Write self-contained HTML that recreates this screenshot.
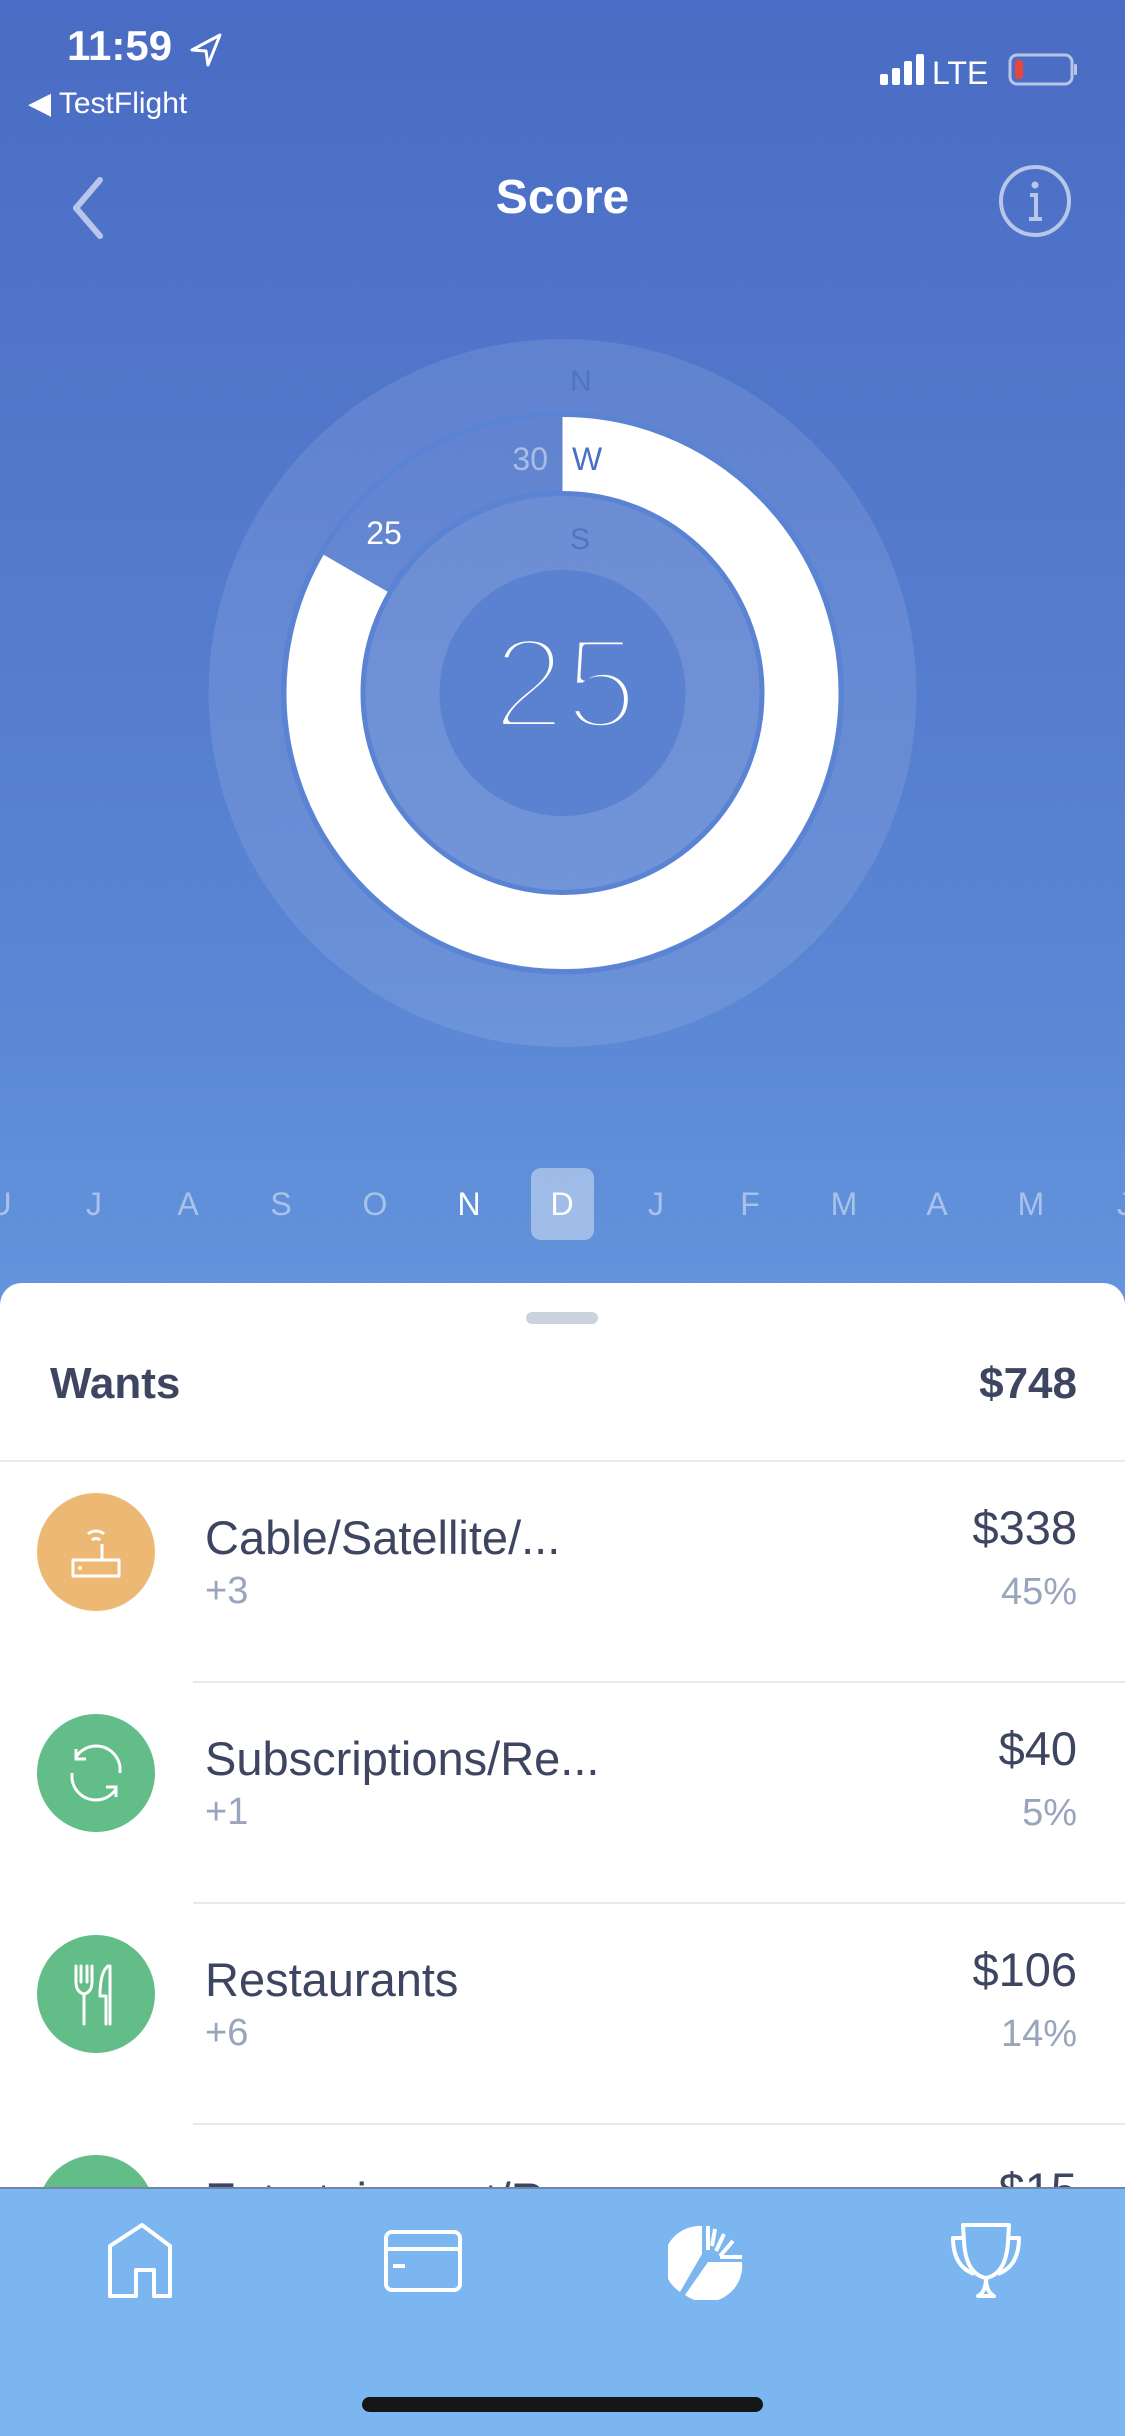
<!DOCTYPE html>
<html><head><meta charset="utf-8">
<style>
*{margin:0;padding:0;box-sizing:border-box}
body{width:1125px;height:2436px;overflow:hidden;position:relative;font-family:"Liberation Sans",sans-serif;background:linear-gradient(180deg,#4a6cc4 0%,#5a85d4 40%,#6596dd 55%,#6596dd 100%)}
.a{position:absolute;white-space:nowrap}
.m{position:absolute;top:1186px;width:60px;text-align:center;font-size:32px;color:rgba(255,255,255,0.45);line-height:36px;transform:translateX(-30px)}
.t{color:#3d4560;font-size:47px}
.s{color:#98a5bd;font-size:38px}
.r{right:48px;text-align:right}
.ic{position:absolute;left:37px;width:118px;height:118px;border-radius:50%}
.sep{position:absolute;left:193px;right:0;height:2px;background:#e6eaf0}
</style></head><body>
<!-- status bar -->
<div class="a" style="left:67px;top:22px;font-size:42px;font-weight:bold;color:#fff">11:59</div>
<svg class="a" style="left:188px;top:32px" width="36" height="36" viewBox="0 0 36 36"><path d="M32 3 L4 18 L18 19 L20 33 Z" fill="none" stroke="#fff" stroke-width="3" stroke-linejoin="round"/></svg>
<div class="a" style="left:28px;top:86px;font-size:30px;color:#fff">◀ TestFlight</div>
<svg class="a" style="left:878px;top:50px" width="200" height="40" viewBox="0 0 200 40">
<rect x="2" y="24" width="8" height="11" rx="2" fill="#fff"/><rect x="14" y="18" width="8" height="17" rx="2" fill="#fff"/><rect x="26" y="11" width="8" height="24" rx="2" fill="#fff"/><rect x="38" y="4" width="8" height="31" rx="2" fill="#fff"/>
<text x="54" y="34" font-family="Liberation Sans" font-size="32" fill="#fff">LTE</text>
<rect x="132" y="5" width="62" height="29" rx="7" fill="none" stroke="rgba(255,255,255,0.6)" stroke-width="3"/><rect x="137" y="10" width="8" height="19" rx="3" fill="#e8453c"/><rect x="196" y="14" width="3" height="11" rx="1" fill="rgba(255,255,255,0.6)"/>
</svg>
<!-- nav -->
<svg class="a" style="left:66px;top:176px" width="44" height="64" viewBox="0 0 44 64"><path d="M34 4 L10 32 L34 60" fill="none" stroke="rgba(255,255,255,0.6)" stroke-width="6" stroke-linecap="round" stroke-linejoin="round"/></svg>
<div class="a" style="left:0;width:1125px;text-align:center;top:170px;font-size:48px;font-weight:bold;color:#fff">Score</div>
<svg class="a" style="left:997px;top:163px" width="76" height="76" viewBox="0 0 76 76"><circle cx="38" cy="38" r="34" fill="none" stroke="rgba(255,255,255,0.6)" stroke-width="4"/><circle cx="38" cy="22" r="3.5" fill="rgba(255,255,255,0.6)"/><path d="M33 32 H39 V56 M32 56 H45" fill="none" stroke="rgba(255,255,255,0.6)" stroke-width="4"/></svg>
<!-- gauge -->
<svg class="a" style="left:0;top:0" width="1125" height="1100" viewBox="0 0 1125 1100">
<circle cx="562.5" cy="693" r="354" fill="rgba(255,255,255,0.1)"/>
<circle cx="562.5" cy="693" r="200" fill="rgba(255,255,255,0.06)"/>
<circle cx="562.5" cy="693" r="123" fill="#5a82d1"/>
<circle cx="562.5" cy="693" r="279" fill="none" stroke="#5a83d4" stroke-width="5"/>
<circle cx="562.5" cy="693" r="200" fill="none" stroke="#5a83d4" stroke-width="6"/>
<circle cx="562.5" cy="693" r="239" fill="none" stroke="#fff" stroke-width="74" stroke-dasharray="1251.5 2000" transform="rotate(-90 562.5 693)"/>
<text x="581" y="391" text-anchor="middle" font-family="Liberation Sans" font-size="30" fill="#4f74c6">N</text>
<text x="548" y="470" text-anchor="end" font-family="Liberation Sans" font-size="32" fill="rgba(255,255,255,0.45)">30</text>
<text x="572" y="470" font-family="Liberation Sans" font-size="32" fill="#4a6fc4">W</text>
<text x="384" y="544" text-anchor="middle" font-family="Liberation Sans" font-size="32" fill="#fff">25</text>
<text x="580" y="549" text-anchor="middle" font-family="Liberation Sans" font-size="30" fill="#4f74c6">S</text>
<text x="565" y="728" text-anchor="middle" font-family="Liberation Sans" font-size="130" fill="#fff" stroke="#5a82d1" stroke-width="8" stroke-linejoin="round">25</text>
</svg>
<!-- months -->
<div class="a" style="left:531px;top:1168px;width:63px;height:72px;border-radius:10px;background:rgba(255,255,255,0.4)"></div>
<div class="m" style="left:0px">U</div><div class="m" style="left:94px">J</div><div class="m" style="left:188px">A</div><div class="m" style="left:281px">S</div><div class="m" style="left:375px">O</div><div class="m" style="left:469px;color:#fff">N</div><div class="m" style="left:562px;color:#fff">D</div><div class="m" style="left:656px">J</div><div class="m" style="left:750px">F</div><div class="m" style="left:844px">M</div><div class="m" style="left:937px">A</div><div class="m" style="left:1031px">M</div><div class="m" style="left:1125px">J</div>
<!-- sheet -->
<div class="a" style="left:0;top:1283px;width:1125px;height:1000px;background:#fff;border-radius:22px 22px 0 0"></div>
<div class="a" style="left:526px;top:1312px;width:72px;height:12px;border-radius:6px;background:#cbd3dd"></div>
<div class="a" style="left:50px;top:1359px;font-size:44px;font-weight:bold;color:#3d4560">Wants</div>
<div class="a r" style="top:1359px;font-size:44px;font-weight:bold;color:#3d4560">$748</div>
<div class="a" style="left:0;right:0;top:1460px;height:2px;background:#e6eaf0"></div>
<!-- row1 -->
<div class="ic" style="top:1493px;background:#edb774"></div>
<svg class="a" style="left:66px;top:1520px" width="60" height="66" viewBox="0 0 60 66"><path d="M22 14 A12 12 0 0 1 38 14 M26 20 A6 6 0 0 1 34 20" fill="none" stroke="#fff" stroke-width="3"/><path d="M36 24 V40 M7 40 H53 V56 H7 Z" fill="none" stroke="#fff" stroke-width="3" stroke-linejoin="round"/><circle cx="14" cy="48" r="2" fill="#fff"/></svg>
<div class="a t" style="left:205px;top:1510px">Cable/Satellite/...</div>
<div class="a s" style="left:205px;top:1570px">+3</div>
<div class="a t r" style="top:1500px">$338</div>
<div class="a s r" style="top:1571px">45%</div>
<div class="sep" style="top:1681px"></div>
<!-- row2 -->
<div class="ic" style="top:1714px;background:#62bd88"></div>
<svg class="a" style="left:62px;top:1739px" width="68" height="68" viewBox="0 0 68 68"><path d="M14 18 A24 24 0 0 1 58 28 V34 M54 50 A24 24 0 0 1 10 40 V34" fill="none" stroke="#fff" stroke-width="3"/><path d="M14 10 V20 H24 M54 58 V48 H44" fill="none" stroke="#fff" stroke-width="3"/></svg>
<div class="a t" style="left:205px;top:1731px">Subscriptions/Re...</div>
<div class="a s" style="left:205px;top:1791px">+1</div>
<div class="a t r" style="top:1721px">$40</div>
<div class="a s r" style="top:1792px">5%</div>
<div class="sep" style="top:1902px"></div>
<!-- row3 -->
<div class="ic" style="top:1935px;background:#62bd88"></div>
<svg class="a" style="left:66px;top:1960px" width="60" height="70" viewBox="0 0 60 70"><path d="M10 6 V22 Q10 32 18 34 V64 M26 6 V22 Q26 32 18 34 M15 6 V22 M21 6 V22 M42 6 Q34 12 34 36 H40 V64 M44 6 V64" fill="none" stroke="#fff" stroke-width="3" stroke-linejoin="round" stroke-linecap="round"/></svg>
<div class="a t" style="left:205px;top:1952px">Restaurants</div>
<div class="a s" style="left:205px;top:2012px">+6</div>
<div class="a t r" style="top:1942px">$106</div>
<div class="a s r" style="top:2013px">14%</div>
<div class="sep" style="top:2123px"></div>
<!-- row4 -->
<div class="ic" style="top:2155px;background:#62bd88"></div>
<div class="a t" style="left:205px;top:2172px">Entertainment/R...</div>
<div class="a t r" style="top:2162px">$15</div>
<!-- tab bar -->
<div class="a" style="left:0;top:2187px;width:1125px;height:249px;background:#7bb6f0;border-top:2px solid #6f86a8"></div>
<svg class="a" style="left:106px;top:2222px" width="72" height="78" viewBox="0 0 72 78"><path d="M4 74 V24 L36 3 L64 24 V74 H48 V48 H30 V74 Z" fill="none" stroke="#fff" stroke-width="4" stroke-linejoin="round"/></svg>
<svg class="a" style="left:383px;top:2229px" width="80" height="66" viewBox="0 0 80 66"><rect x="3" y="3" width="74" height="58" rx="6" fill="none" stroke="#fff" stroke-width="4"/><path d="M3 20 H77 M10 37 H22" stroke="#fff" stroke-width="4"/></svg>
<svg class="a" style="left:668px;top:2224px" width="76" height="76" viewBox="0 0 76 76"><path d="M34 2 A36 36 0 0 0 12 68 L34 30 Z" fill="#fff"/><path d="M17 71 A36 36 0 0 0 74 38 H40 Z" fill="#fff"/><path d="M40 2 V26 M47 5 L44 22 M56 10 L48 27 M65 17 L52 32 M74 33 H52" stroke="#fff" stroke-width="4"/></svg>
<svg class="a" style="left:950px;top:2222px" width="72" height="78" viewBox="0 0 72 78"><path d="M13 3 H59 L58 20 Q56 52 36 56 Q16 52 14 20 Z M14 16 H3 Q3 44 24 52 M58 16 H69 Q69 44 48 52 M36 56 Q36 70 28 74 H44 Q36 70 36 56" fill="none" stroke="#fff" stroke-width="4" stroke-linejoin="round"/></svg>
<div class="a" style="left:362px;top:2397px;width:401px;height:15px;border-radius:8px;background:#161616"></div>
</body></html>
